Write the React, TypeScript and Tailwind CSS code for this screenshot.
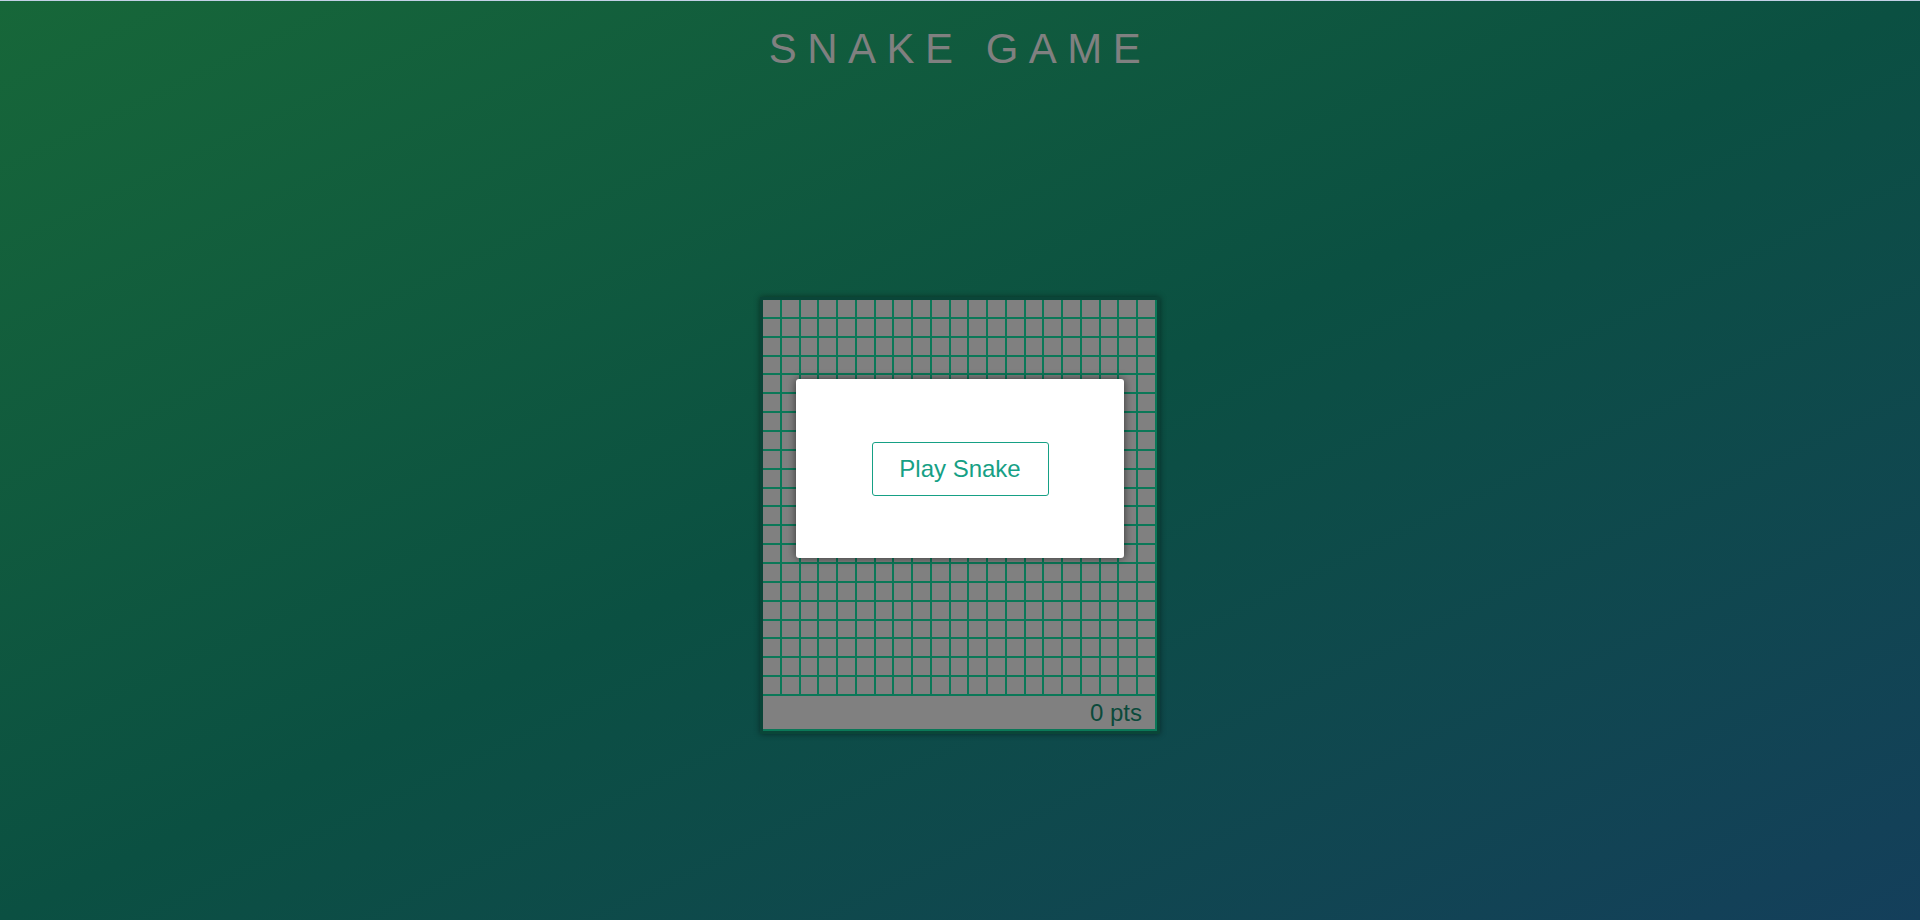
import React from 'react';

const ROWS = 21;
const COLS = 21;

const Board = () => {
  const cells = Array.from({ length: ROWS * COLS });

  return (
    <div className="relative mx-auto mt-[227px] w-[400px] border-[3px] border-[#0a4538] shadow-[0_0_6px_rgba(0,0,0,0.45)]">
      {/* Grid */}
      <div className="grid h-[396px] grid-cols-[repeat(21,minmax(0,1fr))] grid-rows-[repeat(21,minmax(0,1fr))] gap-[2px] bg-[#0b7858] pr-[2px] pb-[2px]">
        {cells.map((_, i) => (
          <div key={i} className="bg-[#808080]" />
        ))}
      </div>

      {/* Score */}
      <div className="flex h-[35px] items-center justify-end border-r-2 border-b-2 border-[#0b7858] bg-[#808080] pr-[13px]">
        <span className="text-[24px] leading-none text-[#0b4a3b]">0 pts</span>
      </div>

      {/* Start dialog */}
      <div className="absolute top-[79px] left-1/2 flex h-[179px] w-[328px] -translate-x-1/2 items-center justify-center rounded-[3px] bg-white shadow-[0_0_8px_rgba(0,0,0,0.6)]">
        <button
          type="button"
          className="flex h-[54px] w-[177px] items-center justify-center rounded-[3px] border border-[#16a085] bg-white text-[24px] leading-none text-[#16a085]"
        >
          Play Snake
        </button>
      </div>
    </div>
  );
};

const App = () => {
  return (
    <div className="h-screen w-full overflow-hidden bg-[linear-gradient(to_bottom_right,#176739,#0b5042,#143f5b)] font-['Liberation_Sans',Arial,sans-serif]">
      <div className="h-px bg-[#c3d0e6]" />
      <h1 className="pt-[27px] text-center text-[42px] leading-none font-normal tracking-[0.25em] text-[#808080]">
        SNAKE GAME
      </h1>
      <Board />
    </div>
  );
};

export default App;
